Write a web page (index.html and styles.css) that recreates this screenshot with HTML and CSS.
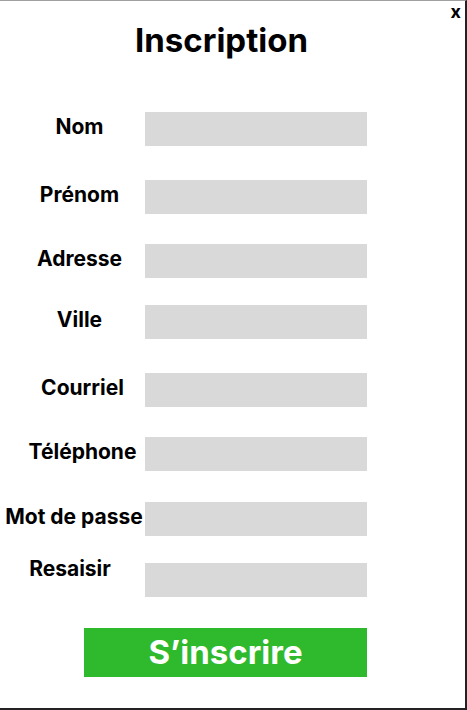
FILE: index.html
```html
<!DOCTYPE html>
<html lang="fr">
<head>
  <meta charset="UTF-8">
  <title>Inscription</title>
  <link rel="stylesheet" href="styles.css">
</head>
<body>
<div class="page">
  <span class="close">x</span>
  <h1 class="title">Inscription</h1>
  <form class="form">
    <div class="row">
      <label class="label" for="nom">Nom</label>
      <input class="field" id="nom" type="text">
    </div>
    <div class="row row--loose">
      <label class="label" for="prenom">Prénom</label>
      <input class="field" id="prenom" type="text">
    </div>
    <div class="row">
      <label class="label" for="adresse">Adresse</label>
      <input class="field" id="adresse" type="text">
    </div>
    <div class="row row--tight">
      <label class="label" for="ville">Ville</label>
      <input class="field" id="ville" type="text">
    </div>
    <div class="row row--loose">
      <label class="label label--right" for="courriel">Courriel</label>
      <input class="field" id="courriel" type="email">
    </div>
    <div class="row">
      <label class="label label--right" for="tel">Téléphone</label>
      <input class="field" id="tel" type="tel">
    </div>
    <div class="row row--mid">
      <label class="label label--wide" for="mdp">Mot de passe</label>
      <input class="field" id="mdp" type="password">
    </div>
    <div class="row row--tight">
      <label class="label label--left label--top" for="mdp2">Resaisir</label>
      <input class="field" id="mdp2" type="password">
    </div>
    <button class="submit" type="button">S’inscrire</button>
  </form>
</div>
</body>
</html>
```

FILE: styles.css
```css
* {
  margin: 0;
  padding: 0;
  box-sizing: border-box;
}

body {
  font-family: Inter, "Liberation Sans", sans-serif;
  background-color: #fff;
}

.page {
  position: relative;
  width: 467px;
  height: 710px;
  border-top: 1px solid #a0a0a0;
  border-right: 2px solid #222;
  border-bottom: 2px solid #222;
  padding-top: 19px;
}

/*bouton fermer en haut a droite*/
.close {
  position: absolute;
  top: 0;
  right: 4px;
  font-size: 18px;
  font-weight: 700;
  line-height: 21px;
  color: #000;
}

.title {
  font-size: 33px;
  font-weight: 700;
  line-height: 40px;
  text-align: center;
  padding-right: 22px;
  color: #000;
}

.form {
  margin-top: 52px;
}

.row {
  display: flex;
  align-items: center;
  margin-top: 30px;
}

.row:first-child {
  margin-top: 0;
}

.row--loose {
  margin-top: 34px;
}

.row--mid {
  margin-top: 31px;
}

.row--tight {
  margin-top: 27px;
}

.label {
  width: 145px;
  padding-left: 14px;
  padding-bottom: 4px;
  text-align: center;
  font-size: 21px;
  font-weight: 700;
  line-height: 26px;
  white-space: nowrap;
  color: #000;
}

.label--right {
  padding-left: 20px;
}

.label--wide {
  padding-left: 3px;
}

.label--left {
  padding-left: 0;
  padding-right: 5px;
}

.label--top {
  align-self: flex-start;
  margin-top: -7px;
}

.field {
  width: 222px;
  height: 34px;
  border: none;
  background-color: #d9d9d9;
  outline: none;
}

.submit {
  display: block;
  width: 283px;
  height: 49px;
  margin: 31px 0 0 84px;
  border: none;
  background-color: #2fb92c;
  color: #fff;
  font-family: Inter, "Liberation Sans", sans-serif;
  font-size: 33px;
  font-weight: 700;
  line-height: 49px;
}
```
